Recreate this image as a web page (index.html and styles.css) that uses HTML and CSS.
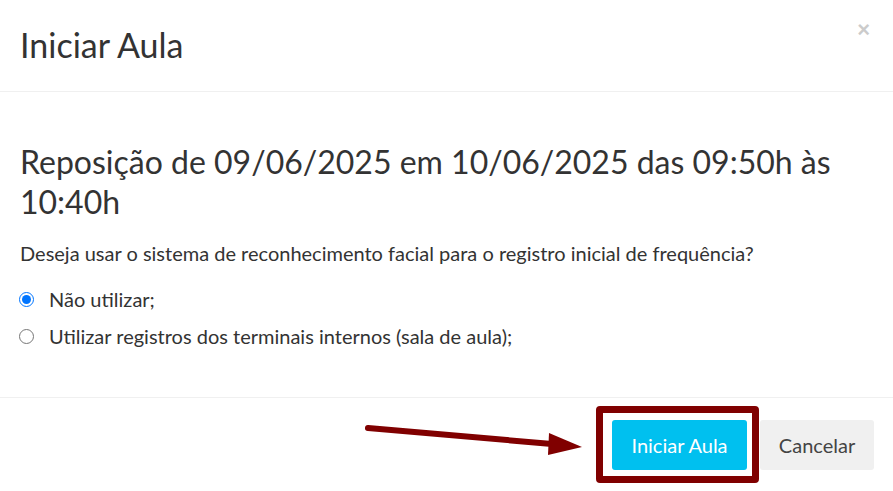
FILE: index.html
```html
<!DOCTYPE html>
<html lang="pt-BR">
<head>
  <meta charset="UTF-8" />
  <title>Iniciar Aula</title>
  <link rel="stylesheet" href="styles.css">
</head>
<body>
  <div class="modal" role="dialog" aria-labelledby="modalTitle">
    <div class="modal-header">
      <h4 id="modalTitle" class="modal-title">Iniciar Aula</h4>
      <button class="close" aria-label="Fechar">&times;</button>
    </div>

    <div class="modal-body">
      <h3>Reposição de 09/06/2025 em 10/06/2025 das 09:50h às 10:40h</h3>
      <p>Deseja usar o sistema de reconhecimento facial para o registro inicial de frequência?</p>

      <label class="radio">
        <input type="radio" name="facial" value="0" checked />
        <span>Não utilizar;</span>
      </label>
      <label class="radio">
        <input type="radio" name="facial" value="1" />
        <span>Utilizar registros dos terminais internos (sala de aula);</span>
      </label>
    </div>

    <div class="modal-footer">
      <svg class="arrow" viewBox="0 0 240 45" aria-hidden="true" focusable="false">
        <line x1="8" y1="13" x2="192" y2="29" stroke="#800000" stroke-width="6" stroke-linecap="round"/>
        <polygon points="189,18 222,32 188,40" fill="#800000"/>
      </svg>
      <div class="highlight">
        <button class="btn btn-info">Iniciar Aula</button>
      </div>
      <button class="btn btn-default">Cancelar</button>
    </div>
  </div>
</body>
</html>
```

FILE: styles.css
```css
*, *::before, *::after {
  box-sizing: border-box;
}
body {
  margin: 0;
  font-family: 'Source Sans Pro', Lato, 'Liberation Sans', sans-serif;
  background: #fff;
  color: #333;
}

.modal {
  width: 893px;
  height: 491px;
  background: #fff;
  display: flex;
  flex-direction: column;
}


.modal-header {
  height: 92px;
  padding: 0 20px;
  display: flex;
  align-items: center;
  justify-content: space-between;
  border-bottom: 1px solid #f0f0f0;
}
.modal-title {
  margin: 0 0 3px;
  font-size: 34px;
  font-weight: 400;
  color: #333;
}
.close {
  align-self: flex-start;
  margin-top: 19px;
  margin-right: 3px;
  padding: 0;
  border: none;
  background: transparent;
  font-family: 'Liberation Sans', sans-serif;
  font-size: 22px;
  font-weight: 700;
  line-height: 1;
  color: #000;
  opacity: 0.2;
  cursor: pointer;
}


.modal-body {
  flex-grow: 1;
  padding: 50px 20px 0;
  border-bottom: 1px solid #f0f0f0;
}
.modal-body h3 {
  margin: 0;
  font-size: 32px;
  font-weight: 400;
  line-height: 40px;
  color: #333;
}
.modal-body p {
  margin: 17px 0 18px;
  font-size: 20px;
  line-height: 28px;
}

.radio {
  display: flex;
  align-items: center;
  gap: 15px;
  font-size: 20px;
  line-height: 28px;
  margin-bottom: 9px;
  cursor: pointer;
}
.radio input {
  flex-shrink: 0;
  width: 15px;
  height: 15px;
  margin: 0 0 0 -1px;
  accent-color: #0075ff;
}


.modal-footer {
  position: relative;
  height: 93px;
  padding: 22px 19px 0;
  display: flex;
  justify-content: flex-end;
  align-items: flex-start;
  gap: 13px;
}

.btn {
  height: 50px;
  padding: 0 10px;
  border: none;
  border-radius: 3px;
  font-family: inherit;
  font-size: 20px;
  cursor: pointer;
}
.btn-info {
  width: 135px;
  background: #00c0ef;
  color: #fff;
}
.btn-default {
  width: 114px;
  background: #f0f0f0;
  color: #444;
}


.highlight {
  position: relative;
}
.highlight::after {
  content: "";
  position: absolute;
  left: -16px;
  right: -12px;
  top: -14px;
  bottom: -13px;
  border: 7px solid #800000;
  border-radius: 4px;
  pointer-events: none;
}

.arrow {
  position: absolute;
  left: 360px;
  top: 17px;
  width: 240px;
  height: 45px;
}
```
